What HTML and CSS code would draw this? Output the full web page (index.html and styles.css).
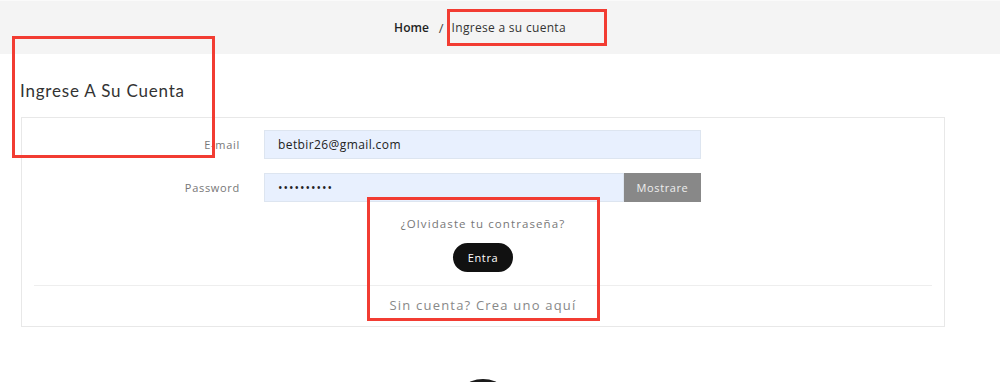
FILE: index.html
```html
<!DOCTYPE html>
<html lang="es">
<head>
    <meta charset="UTF-8">
    <meta name="viewport" content="width=device-width, initial-scale=1.0">
    <title>Ingrese a su cuenta</title>
    <link rel="stylesheet" href="styles.css">
</head>
<body>
    <!-- Migas de pan -->
    <div class="breadcrumb">
        <a class="crumb home" href="#">Home</a>
        <span class="sep">/</span>
        <span class="crumb current">Ingrese a su cuenta</span>
    </div>

    <div class="page">
        <h1 class="title">Ingrese A Su Cuenta</h1>

        <div class="card">
            <form class="login-form" onsubmit="return false">
                <label class="label" for="email">E-mail</label>
                <input class="input" id="email" type="email" value="betbir26@gmail.com">
                <span></span>

                <label class="label" for="password">Password</label>
                <div class="pass-group">
                    <input class="input" id="password" type="password" value="betbir2626">
                    <button class="show-btn" type="button">Mostrare</button>
                </div>
                <span></span>

                <div class="forgot"><a href="#">¿Olvidaste tu contraseña?</a></div>
                <div class="submit-row"><button class="submit" type="submit">Entra</button></div>
            </form>
            <hr class="divider">
            <div class="no-account"><a href="#">Sin cuenta? Crea uno aquí</a></div>
        </div>

        <div class="footer-logo"></div>
    </div>

    <!-- Marcas rojas de la captura -->
    <div class="mark mark-crumb"></div>
    <div class="mark mark-title"></div>
    <div class="mark mark-links"></div>
</body>
</html>
```

FILE: styles.css
```css
/* Общие стили */
body {
    margin: 0;
    font-family: 'Open Sans', 'Liberation Sans', sans-serif;
    background-color: #ffffff;
    color: #333;
    overflow: hidden;
    height: 382px;
}

a {
    color: inherit;
    text-decoration: none;
}

.breadcrumb {
    background-color: #f4f4f4;
    border-top: 1px solid #fafafa;
    height: 53px;
    display: flex;
    justify-content: center;
    align-items: center;
    gap: 8px;
    font-size: 12px;
    padding-right: 40px;
}

.crumb.home {
    font-weight: 600;
    color: #222;
    margin-right: 2px;
}

.sep {
    color: #444;
    font-size: 13px;
}

.crumb.current {
    color: #333;
    letter-spacing: 0.3px;
}

.page {
    padding: 0 55px 0 21px;
}

.title {
    font-family: 'Lato', sans-serif;
    font-weight: 400;
    font-size: 17px;
    letter-spacing: 0.8px;
    color: #333;
    margin: 27px 0 0 -1px;
    height: 36px;
    line-height: 20px;
}

.card {
    border: 1px solid #e8e8e8;
    padding: 12px;
    height: 184px;
}

.login-form {
    display: grid;
    grid-template-columns: 206px 437px 1fr;
    column-gap: 24px;
    row-gap: 14px;
    align-items: center;
}

.label {
    text-align: right;
    font-size: 11px;
    letter-spacing: 0.7px;
    color: #777;
}

.input {
    box-sizing: border-box;
    height: 29px;
    background-color: #e8f0fe;
    border: 1px solid #dde5f0;
    padding: 0 13px;
    font-family: 'Open Sans', sans-serif;
    font-size: 12px;
    letter-spacing: 0.4px;
    color: #222;
    outline: none;
    width: 100%;
}

.pass-group {
    display: flex;
}

.pass-group .input {
    flex: 1;
    letter-spacing: 1px;
}

.show-btn {
    width: 77px;
    height: 29px;
    border: none;
    background-color: #888;
    color: #eee;
    font-family: 'Open Sans', sans-serif;
    font-size: 11px;
    letter-spacing: 0.6px;
}

.forgot,
.submit-row {
    grid-column: 1 / -1;
    text-align: center;
}

.forgot {
    font-size: 11.5px;
    letter-spacing: 1.1px;
    color: #777;
}

.submit-row {
    margin-top: -2px;
}

.submit {
    background-color: #111;
    color: #fff;
    border: none;
    border-radius: 15px;
    height: 29px;
    padding: 0 15px;
    font-family: 'Open Sans', sans-serif;
    font-size: 11px;
    letter-spacing: 0.6px;
}

.divider {
    border: none;
    border-top: 1px solid #eee;
    margin: 13px 0 0 0;
}

.no-account {
    text-align: center;
    margin-top: 10px;
    font-size: 13px;
    letter-spacing: 1.2px;
    color: #888;
}

.footer-logo {
    width: 62px;
    height: 62px;
    border-radius: 50%;
    background-color: #1a1a1a;
    margin: 52px auto 0;
}

/* Красные рамки */
.mark {
    position: absolute;
    border: 3px solid #f23c32;
    box-sizing: border-box;
}

.mark-crumb {
    left: 447px;
    top: 9px;
    width: 160px;
    height: 37px;
}

.mark-title {
    left: 12px;
    top: 36px;
    width: 203px;
    height: 122px;
}

.mark-links {
    left: 367px;
    top: 197px;
    width: 233px;
    height: 124px;
}
```
